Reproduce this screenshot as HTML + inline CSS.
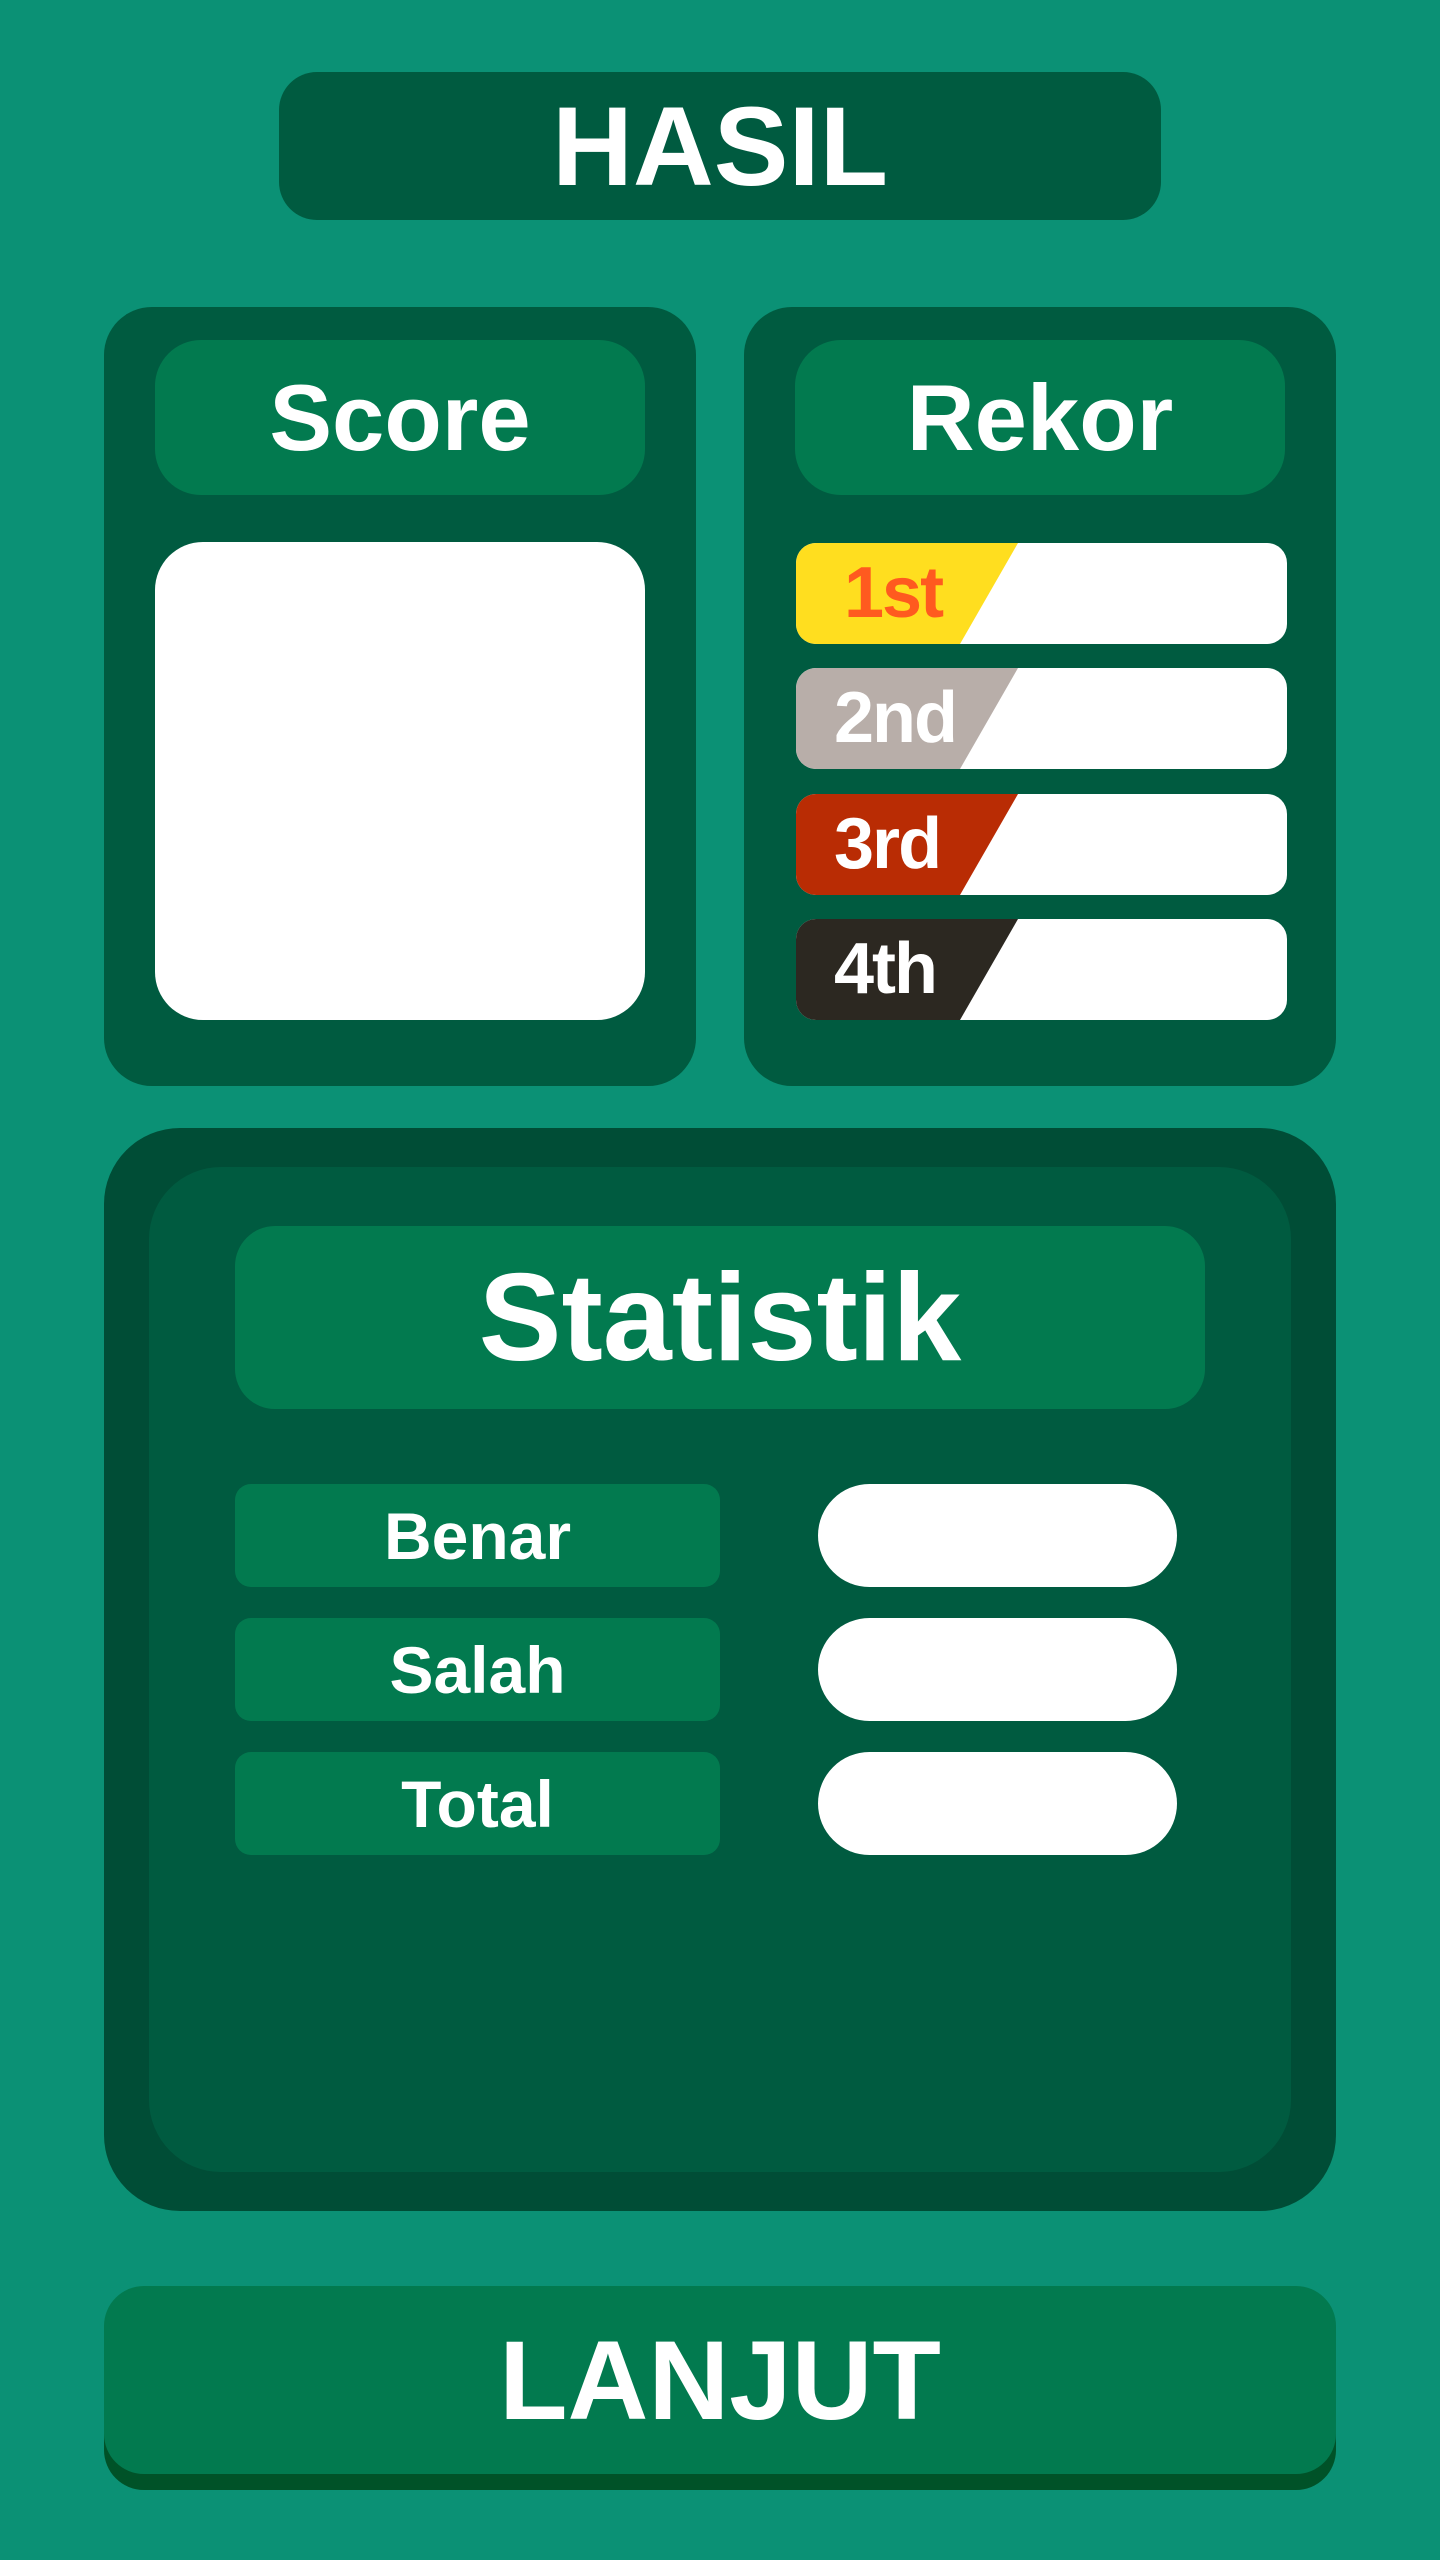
<!DOCTYPE html>
<html><head><meta charset="utf-8"><style>
*{margin:0;padding:0;box-sizing:border-box}
body{width:1440px;height:2560px;background:#0b9175;position:relative;overflow:hidden;font-family:"Liberation Sans",sans-serif;font-weight:bold;color:#fff}
.a{position:absolute}
.c{display:flex;align-items:center;justify-content:center}
.row{position:absolute;left:796px;width:491px;height:101px;background:#fff;border-radius:20px;overflow:hidden}
.row svg{position:absolute;left:0;top:0}
.row span{position:absolute;left:38px;top:0;height:101px;line-height:101px;font-size:72px;letter-spacing:-2px}
.lab{position:absolute;left:235px;width:485px;height:103px;background:#027a4f;border-radius:16px;font-size:66px}
.pill{position:absolute;left:818px;width:359px;height:103px;background:#fff;border-radius:52px}
</style></head><body>
<div class="a c" style="left:279px;top:72px;width:882px;height:148px;background:#005b40;border-radius:38px;font-size:112px">HASIL</div>

<div class="a" style="left:104px;top:307px;width:592px;height:779px;background:#005b40;border-radius:48px"></div>
<div class="a c" style="left:155px;top:340px;width:490px;height:155px;background:#027a4f;border-radius:46px;font-size:94px">Score</div>
<div class="a" style="left:155px;top:542px;width:490px;height:478px;background:#fff;border-radius:48px"></div>

<div class="a" style="left:744px;top:307px;width:592px;height:779px;background:#005b40;border-radius:48px"></div>
<div class="a c" style="left:795px;top:340px;width:490px;height:155px;background:#027a4f;border-radius:46px;font-size:94px">Rekor</div>

<div class="row" style="top:543px"><svg width="491" height="101"><polygon points="0,0 222,0 164,101 0,101" fill="#ffde1f"/></svg><span style="color:#ff5a1f;left:48px">1st</span></div>
<div class="row" style="top:668px"><svg width="491" height="101"><polygon points="0,0 222,0 164,101 0,101" fill="#b8aea9"/></svg><span>2nd</span></div>
<div class="row" style="top:794px"><svg width="491" height="101"><polygon points="0,0 222,0 164,101 0,101" fill="#b92c04"/></svg><span>3rd</span></div>
<div class="row" style="top:919px"><svg width="491" height="101"><polygon points="0,0 222,0 164,101 0,101" fill="#2c2821"/></svg><span>4th</span></div>

<div class="a" style="left:104px;top:1128px;width:1232px;height:1083px;background:#004d36;border-radius:76px"></div>
<div class="a" style="left:149px;top:1167px;width:1142px;height:1005px;background:#005b40;border-radius:72px"></div>
<div class="a c" style="left:235px;top:1226px;width:970px;height:183px;background:#027a4f;border-radius:40px;font-size:124px">Statistik</div>

<div class="lab c" style="top:1484px">Benar</div>
<div class="lab c" style="top:1618px">Salah</div>
<div class="lab c" style="top:1752px">Total</div>
<div class="pill" style="top:1484px"></div>
<div class="pill" style="top:1618px"></div>
<div class="pill" style="top:1752px"></div>

<div class="a" style="left:104px;top:2300px;width:1232px;height:190px;background:#005228;border-radius:40px"></div>
<div class="a c" style="left:104px;top:2286px;width:1232px;height:188px;background:#027a4f;border-radius:40px;font-size:112px">LANJUT</div>
</body></html>
